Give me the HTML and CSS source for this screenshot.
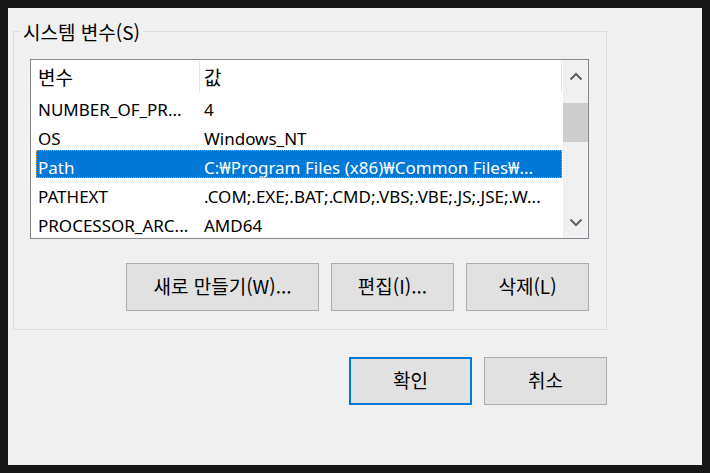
FILE: index.html
```html
<!DOCTYPE html>
<html lang="ko">
<head>
    <meta charset="UTF-8">
    <title>환경 변수</title>
    <link rel="stylesheet" href="styles.css">
</head>
<body>

    <div id="dialog">
        <div class="group">
            <span class="group-title ko">시스템 변수(S)</span>

            <div class="list">
                <div class="list-body">
                    <div class="list-head">
                        <span class="col-name ko">변수</span>
                        <span class="col-value ko">값</span>
                    </div>
                    <div class="row"><span>NUMBER_OF_PR...</span><span>4</span></div>
                    <div class="row"><span>OS</span><span>Windows_NT</span></div>
                    <div class="row selected"><span>Path</span><span>C:₩Program Files (x86)₩Common Files₩...</span></div>
                    <div class="row"><span>PATHEXT</span><span>.COM;.EXE;.BAT;.CMD;.VBS;.VBE;.JS;.JSE;.W...</span></div>
                    <div class="row"><span>PROCESSOR_ARC...</span><span>AMD64</span></div>
                </div>
                <div class="scrollbar">
                    <div class="arrow">
                        <svg width="14" height="9" viewBox="0 0 14 9"><polyline points="1.5,7.5 7,2 12.5,7.5" fill="none" stroke="#606060" stroke-width="2"/></svg>
                    </div>
                    <div class="track"><div class="thumb"></div></div>
                    <div class="arrow">
                        <svg width="14" height="9" viewBox="0 0 14 9"><polyline points="1.5,1.5 7,7 12.5,1.5" fill="none" stroke="#606060" stroke-width="2"/></svg>
                    </div>
                </div>
            </div>

            <div class="list-buttons">
                <button class="btn btn-wide"><span class="ko">새로 만들기(W)...</span></button>
                <button class="btn"><span class="ko">편집(I)...</span></button>
                <button class="btn"><span class="ko">삭제(L)</span></button>
            </div>
        </div>

        <div class="dialog-buttons">
            <button class="btn btn-default"><span class="ko">확인</span></button>
            <button class="btn"><span class="ko">취소</span></button>
        </div>
    </div>

</body>
</html>
```

FILE: styles.css
```css
body {
    margin: 0;
    padding: 8px;
    background-color: #171717;
    font-family: "Noto Sans", "Noto Sans CJK KR", sans-serif;
    font-size: 17px;
    color: #000;
}

.ko {
    font-family: "Noto Sans CJK KR", sans-serif;
    font-size: 19px;
}

#dialog {
    width: 694px;
    height: 457px;
    box-sizing: border-box;
    padding: 23px 0 0 5px;
    background-color: #f0f0f0;
}

.group {
    position: relative;
    width: 594px;
    height: 299px;
    box-sizing: border-box;
    border: 1px solid #dcdcdc;
    padding: 27px 17px 0 16px;
}

.group-title {
    position: absolute;
    top: -12px;
    left: 6px;
    padding: 0 3px;
    height: 24px;
    line-height: 24px;
    background-color: #f0f0f0;
}

.list {
    display: flex;
    width: 559px;
    height: 180px;
    box-sizing: border-box;
    border: 1px solid #828790;
    background-color: #fff;
}

.list-body {
    flex: 1;
    padding: 0 1px 0 5px;
    overflow: hidden;
}

.list-head,
.row {
    display: grid;
    grid-template-columns: 166px 1fr;
    padding-left: 2px;
    white-space: nowrap;
}

.list-head {
    height: 32px;
    box-sizing: border-box;
    padding-top: 4px;
    line-height: 26px;
}

.list-head .col-name,
.list-head .col-value {
    position: relative;
}

.list-head .col-name::after,
.list-head .col-value::after {
    content: "";
    position: absolute;
    top: -3px;
    right: 4px;
    width: 1px;
    height: 31px;
    background-color: #e5e5e5;
}

.list-head .col-value::after {
    right: 0;
}

.row {
    height: 29px;
    box-sizing: border-box;
    padding-top: 6px;
    line-height: 23px;
}

.row.selected {
    height: 28px;
    margin-bottom: 1px;
    background-color: #0078d7;
    color: #fff;
    outline: 1px dotted #e8923a;
    outline-offset: -1px;
}

.scrollbar {
    display: flex;
    flex-direction: column;
    width: 25px;
    background-color: #f0f0f0;
}

.arrow {
    height: 32px;
    display: flex;
    align-items: center;
    justify-content: center;
}

.track {
    flex: 1;
    padding-top: 11px;
}

.thumb {
    height: 39px;
    background-color: #cdcdcd;
}

.list-buttons {
    display: flex;
    justify-content: flex-end;
    gap: 12px;
    margin-top: 24px;
}

.btn {
    width: 123px;
    height: 48px;
    border: 1px solid #adadad;
    background-color: #e1e1e1;
    font-family: "Noto Sans", "Noto Sans CJK KR", sans-serif;
    font-size: 17px;
    line-height: 24px;
    color: #000;
    padding: 0;
}

.btn-wide {
    width: 193px;
}

.btn-default {
    border: 2px solid #0078d7;
}

.dialog-buttons {
    display: flex;
    justify-content: flex-end;
    gap: 12px;
    width: 594px;
    margin-top: 27px;
}
```
